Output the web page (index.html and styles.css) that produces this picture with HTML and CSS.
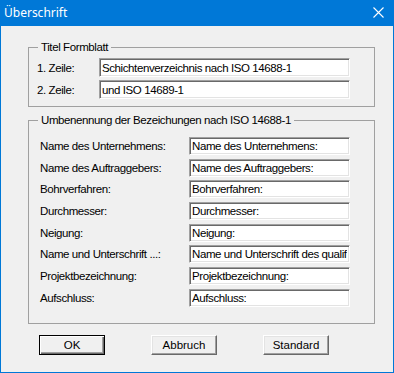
FILE: index.html
```html
<!DOCTYPE html>
<html lang="de">
  <head>
    <meta charset="UTF-8" />
    <title>Überschrift</title>
    <link rel="stylesheet" href="styles.css">
  </head>
  <body>
    <div class="window">
      <div class="titlebar">
        <span class="title">Überschrift</span>
        <svg class="close" width="11" height="11" viewBox="0 0 11 11">
          <path d="M0.5 0.5 L10.5 10.5 M10.5 0.5 L0.5 10.5" stroke="#fff" stroke-width="1.1" fill="none" />
        </svg>
      </div>

      <div class="content">
        <fieldset class="group group-title">
          <legend>Titel Formblatt</legend>
          <div class="row">
            <label>1. Zeile:</label>
            <input class="field" type="text" value="Schichtenverzeichnis nach ISO 14688-1" />
          </div>
          <div class="row">
            <label>2. Zeile:</label>
            <input class="field" type="text" value="und ISO 14689-1" />
          </div>
        </fieldset>

        <fieldset class="group group-names">
          <legend>Umbenennung der Bezeichungen nach ISO 14688-1</legend>
          <div class="row">
            <label>Name des Unternehmens:</label>
            <input class="field" type="text" value="Name des Unternehmens:" />
          </div>
          <div class="row">
            <label>Name des Auftraggebers:</label>
            <input class="field" type="text" value="Name des Auftraggebers:" />
          </div>
          <div class="row">
            <label>Bohrverfahren:</label>
            <input class="field" type="text" value="Bohrverfahren:" />
          </div>
          <div class="row">
            <label>Durchmesser:</label>
            <input class="field" type="text" value="Durchmesser:" />
          </div>
          <div class="row">
            <label>Neigung:</label>
            <input class="field" type="text" value="Neigung:" />
          </div>
          <div class="row">
            <label>Name und Unterschrift ...:</label>
            <input class="field" type="text" value="Name und Unterschrift des qualifizierten Bearbeiters:" />
          </div>
          <div class="row">
            <label>Projektbezeichnung:</label>
            <input class="field" type="text" value="Projektbezeichnung:" />
          </div>
          <div class="row">
            <label>Aufschluss:</label>
            <input class="field" type="text" value="Aufschluss:" />
          </div>
        </fieldset>

        <div class="buttons">
          <button class="btn btn-default">OK</button>
          <button class="btn">Abbruch</button>
          <button class="btn">Standard</button>
        </div>
      </div>
    </div>
  </body>
</html>
```

FILE: styles.css
```css
body {
  margin: 0;
  font-family: "Liberation Sans", Arial, sans-serif;
  font-size: 11.5px;
  letter-spacing: -0.4px;
  color: #000;
  background: #fff;
}
.window {
  width: 394px;
  height: 373px;
  box-sizing: border-box;
  border: 1px solid #0078d7;
  border-top: none;
  background: #f0f0f0;
  display: flex;
  flex-direction: column;
}
.titlebar {
  height: 26px;
  flex: none;
  background: #0078d7;
  color: #fff;
  display: flex;
  align-items: center;
  justify-content: space-between;
  padding: 0 9px 0 3px;
}
.title {
  font-family: "Noto Sans", sans-serif;
  font-size: 12px;
  letter-spacing: 0;
  margin-top: -1px;
}
.close {
  display: block;
  margin-top: -1px;
}
.content {
  padding: 15px 0 0 27px;
}
.group {
  width: 347px;
  box-sizing: border-box;
  margin: 0;
  border: 1px solid #a0a0a0;
  display: flex;
  flex-direction: column;
}
.group legend {
  padding: 0 3px;
  line-height: 13px;
}
.row {
  display: flex;
  align-items: center;
}
.row label {
  flex: none;
}
.field {
  box-sizing: border-box;
  height: 19px;
  margin: 0;
  padding: 0 2px;
  font: inherit;
  letter-spacing: -0.4px;
  background: #fff;
  border-top: 1px solid #a0a0a0;
  border-left: 1px solid #a0a0a0;
  border-right: 1px solid #fff;
  border-bottom: 1px solid #fff;
  box-shadow: inset 1px 1px 0 #696969, inset -1px -1px 0 #e3e3e3;
  outline: none;
}
.group-title {
  height: 66px;
  padding: 4px 0 0 8px;
  gap: 3px;
}
.group-title legend {
  margin-left: 1px;
}
.group-title .row label {
  width: 62px;
}
.group-title .field {
  width: 251px;
}
.group-names {
  margin-top: 7px;
  height: 210px;
  padding: 10px 0 0 11px;
  gap: 3.7px;
}
.group-names legend {
  margin-left: -2px;
}
.group-names .row label {
  width: 149px;
}
.group-names .field {
  width: 161px;
  height: 18px;
}
.buttons {
  display: flex;
  gap: 46px;
  margin: 11px 0 0 11px;
}
.btn {
  width: 66px;
  height: 20px;
  box-sizing: border-box;
  margin: 0;
  padding: 0;
  font: inherit;
  letter-spacing: 0;
  color: #000;
  background: #f0f0f0;
  border-top: 1px solid #fff;
  border-left: 1px solid #fff;
  border-right: 1px solid #696969;
  border-bottom: 1px solid #696969;
  box-shadow: inset -1px -1px 0 #a0a0a0, inset 1px 1px 0 #e3e3e3;
}
.btn-default {
  border: 1px solid #000;
  box-shadow: inset 1px 1px 0 #fff, inset -1px -1px 0 #696969, inset -2px -2px 0 #a0a0a0;
}
```
